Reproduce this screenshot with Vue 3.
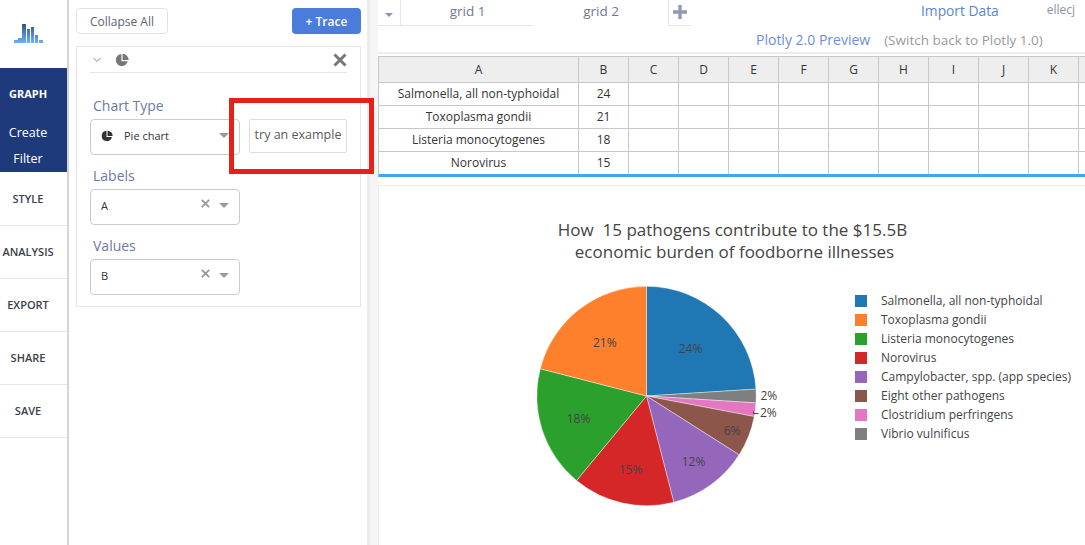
<script setup>
const navItems = ['STYLE', 'ANALYSIS', 'EXPORT', 'SHARE', 'SAVE']
const cols = ['C', 'D', 'E', 'F', 'G', 'H', 'I', 'J', 'K', '']
const rows = [
  ['Salmonella, all non-typhoidal', '24'],
  ['Toxoplasma gondii', '21'],
  ['Listeria monocytogenes', '18'],
  ['Norovirus', '15'],
]
const legend = [
  ['Salmonella, all non-typhoidal', '#1f77b4'],
  ['Toxoplasma gondii', '#fe802d'],
  ['Listeria monocytogenes', '#2ca02c'],
  ['Norovirus', '#d62728'],
  ['Campylobacter, spp. (app species)', '#9467bd'],
  ['Eight other pathogens', '#8c564b'],
  ['Clostridium perfringens', '#e377c2'],
  ['Vibrio vulnificus', '#7f7f7f'],
]
const cx = 110, cy = 110, r = 109.7
const order = [
  [24, '#1f77b4', '24%', 44, -47],
  [2, '#7f7f7f', '', 0, 0],
  [2, '#e377c2', '', 0, 0],
  [6, '#8c564b', '6%', 85.6, 34.7],
  [12, '#9467bd', '12%', 47, 65.7],
  [15, '#d62728', '15%', -16, 73.7],
  [18, '#2ca02c', '18%', -68, 22.7],
  [21, '#fe802d', '21%', -41.7, -53],
]
let acc = 0
const slices = order.map(([v, color, label, lx, ly]) => {
  const a0 = (acc / 100) * 2 * Math.PI
  acc += v
  const a1 = (acc / 100) * 2 * Math.PI
  const p = (a) => `${(cx + r * Math.sin(a)).toFixed(2)} ${(cy - r * Math.cos(a)).toFixed(2)}`
  return { d: `M${cx} ${cy}L${p(a0)}A${r} ${r} 0 0 1 ${p(a1)}Z`, color, label, x: cx + lx, y: cy + ly + 4 }
})
const bars = [
  [0, 17, 4, 3], [4, 15, 4, 5], [8, 1, 4, 19], [13, 6, 3, 14], [17, 4, 3, 16], [21, 12, 3, 8], [25, 17, 4, 3],
]
</script>

<template>
  <div class="page">
    <aside class="rail">
      <div class="logo">
        <svg width="29" height="20" viewBox="0 0 29 20">
          <defs>
            <linearGradient id="barGrad" gradientUnits="userSpaceOnUse" x1="0" y1="0" x2="0" y2="20">
              <stop offset="0" stop-color="#2f4f80" />
              <stop offset="0.55" stop-color="#4f86c8" />
              <stop offset="1" stop-color="#6ab0f5" />
            </linearGradient>
          </defs>
          <rect v-for="(b, i) in bars" :key="i" :x="b[0]" :y="b[1]" :width="b[2]" :height="b[3]" fill="url(#barGrad)" />
        </svg>
      </div>
      <div class="active">
        <div class="active-title">GRAPH</div>
        <div class="active-sub first">Create</div>
        <div class="active-sub">Filter</div>
      </div>
      <div class="nav-list">
        <div v-for="n in navItems" :key="n" class="nav">{{ n }}</div>
      </div>
    </aside>

    <section class="panel">
      <div class="panel-top">
        <button class="collapse">Collapse All</button>
        <button class="trace">+ Trace</button>
      </div>
      <div class="card">
        <div class="card-head">
          <svg class="chev" width="10" height="6" viewBox="0 0 10 6"><path d="M1.5 1l3.5 3.5L8.5 1" fill="none" stroke="#888" stroke-width="1" /></svg>
          <svg width="14" height="14" viewBox="0 0 14 14"><path d="M6.4 1a6 6 0 1 0 6.3 7.3H6.4zM7.6.8v6.3h6A6.2 6.2 0 0 0 7.6.8z" fill="#777" /></svg>
          <svg class="close" width="14" height="14" viewBox="0 0 14 14"><path d="M1.5 1.5l11 11M12.5 1.5l-11 11" stroke="#777" stroke-width="3" /></svg>
        </div>
        <div class="label first-label">Chart Type</div>
        <div class="type-row">
          <div class="select">
            <svg class="sel-pie" width="12" height="12" viewBox="0 0 14 14"><path d="M6.4 1a6 6 0 1 0 6.3 7.3H6.4zM7.6.8v6.3h6A6.2 6.2 0 0 0 7.6.8z" fill="#333" /></svg>
            <span class="sel-text">Pie chart</span>
            <span class="caret"></span>
          </div>
          <div class="example">try an example</div>
        </div>
        <div class="label">Labels</div>
        <div class="select">
          <span class="sel-text plain">A</span>
          <svg class="clear" width="9" height="9" viewBox="0 0 9 9"><path d="M.8.8l7.4 7.4M8.2.8L.8 8.2" stroke="#999" stroke-width="1.8" /></svg>
          <span class="caret near"></span>
        </div>
        <div class="label">Values</div>
        <div class="select">
          <span class="sel-text plain">B</span>
          <svg class="clear" width="9" height="9" viewBox="0 0 9 9"><path d="M.8.8l7.4 7.4M8.2.8L.8 8.2" stroke="#999" stroke-width="1.8" /></svg>
          <span class="caret near"></span>
        </div>
      </div>
    </section>
    <div class="gutter"></div>

    <main class="main">
      <div class="tabs">
        <div class="tab-menu"><span class="tab-caret"></span></div>
        <div class="tab tab1">grid 1</div>
        <div class="tab tab2">grid 2</div>
        <div class="tab-plus">
          <svg width="14" height="14" viewBox="0 0 14 14"><path d="M7 0v14M0 7h14" stroke="#8f9ab3" stroke-width="3.4" /></svg>
        </div>
        <a class="import">Import Data</a>
        <span class="user">ellecj</span>
      </div>
      <div class="preview">
        <span class="preview-a">Plotly 2.0 Preview</span>
        <span class="preview-b">(Switch back to Plotly 1.0)</span>
      </div>
      <div class="grid">
        <div class="row head">
          <div class="cell a">A</div>
          <div class="cell b">B</div>
          <div v-for="c in cols" :key="c" class="cell">{{ c }}</div>
        </div>
        <div v-for="r in rows" :key="r[0]" class="row">
          <div class="cell a">{{ r[0] }}</div>
          <div class="cell b">{{ r[1] }}</div>
          <div v-for="c in cols" :key="c" class="cell"></div>
        </div>
      </div>
      <div class="plot">
        <div class="plot-title">
          <div>How&nbsp; 15 pathogens contribute to the $15.5B</div>
          <div class="line2">economic burden of foodborne illnesses</div>
        </div>
        <div class="plot-body">
          <svg class="pie" width="250" height="224" viewBox="0 0 250 224">
            <g transform="translate(-0.5 1)">
              <path v-for="s in slices" :key="s.color" :d="s.d" :fill="s.color" stroke="#fff" stroke-width="0.4" />
              <text v-for="s in slices.filter(x => x.label)" :key="s.label" :x="s.x" :y="s.y" text-anchor="middle" class="pct">{{ s.label }}</text>
              <text x="224" y="114" class="pct">2%</text>
              <text x="223.5" y="131" class="pct">2%</text>
              <path d="M217 125.5v2h5" stroke="#444" stroke-width="1" fill="none" />
            </g>
          </svg>
          <ul class="legend">
            <li v-for="l in legend" :key="l[0]">
              <span class="swatch" :style="{ background: l[1] }"></span>
              <span>{{ l[0] }}</span>
            </li>
          </ul>
        </div>
      </div>
    </main>

    <div class="redbox"></div>
  </div>
</template>

<style>
html, body { margin: 0; overflow: hidden; background: #fff; }
</style>

<style scoped>
.page {
  position: relative;
  display: flex;
  width: 1085px;
  height: 545px;
  overflow: hidden;
  font-family: "Open Sans", sans-serif;
  color: #444;
  background: #fff;
}
.rail { width: 67px; flex: none; }
.logo { height: 68px; box-sizing: border-box; padding: 23px 0 0 14px; }
.logo svg { display: block; }
.active { height: 104px; background: #1f3a7a; color: #fff; text-align: center; box-sizing: border-box; padding: 18px 11px 0 0; }
.active-title { font-size: 11px; font-weight: 700; line-height: 15px; }
.active-sub { font-size: 12.5px; line-height: 26px; }
.active-sub.first { margin-top: 19px; }
.nav-list { padding-top: 1px; }
.nav {
  height: 53px;
  box-sizing: border-box;
  border-bottom: 1px solid #e6e6e6;
  display: flex;
  align-items: center;
  justify-content: center;
  padding: 0 11px 2px 0;
  font-size: 11px;
  font-weight: 600;
  color: #3a3f4a;
  white-space: nowrap;
}
.panel {
  width: 303px;
  flex: none;
  box-sizing: border-box;
  border-left: 2px solid #d4d4d4;
  border-right: 3px solid #ededed;
  padding: 8px 0 0 7px;
}
.gutter { width: 8px; flex: none; background: #f6f6f6; }
.panel-top { display: flex; justify-content: space-between; align-items: center; width: 285px; }
.collapse {
  width: 92px;
  height: 26px;
  padding: 0;
  background: #fff;
  border: 1px solid #e2e2e2;
  border-radius: 4px;
  font: 12px "Open Sans", sans-serif;
  color: #5c6470;
}
.trace {
  width: 69px;
  height: 26px;
  padding: 0;
  border: 0;
  border-radius: 4px;
  background: #4a7ddb;
  color: #fff;
  font: 600 12px "Open Sans", sans-serif;
}
.card {
  margin-top: 12px;
  width: 285px;
  height: 261px;
  box-sizing: border-box;
  border: 1px solid #e6e6e6;
  padding: 0 13px;
}
.card-head {
  height: 25px;
  display: flex;
  align-items: center;
  gap: 13px;
  border-bottom: 1px solid #e6e6e6;
  padding-left: 2px;
}
.close { margin-left: auto; }
.label { font-size: 14px; line-height: 20px; color: #6b7aa6; margin: 11px 0 3px 3px; }
.first-label { margin: 23px 0 3px 3px; }
.type-row { display: flex; gap: 9px; align-items: flex-start; }
.select {
  width: 150px;
  height: 36px;
  box-sizing: border-box;
  border: 1px solid #ccc;
  border-radius: 4px;
  display: flex;
  align-items: center;
  padding: 0 10px 4px;
  flex: none;
}
.sel-pie { margin-right: 11px; margin-top: 2px; }
.sel-text { font-size: 11px; color: #333; }
.sel-text.plain { flex: 1; }
.caret {
  margin-left: auto;
  width: 0;
  height: 0;
  border-left: 5px solid transparent;
  border-right: 5px solid transparent;
  border-top: 5px solid #999;
}
.caret.near { margin-left: 9px; }
.clear { margin-top: -3px; }
.example {
  width: 98px;
  height: 34px;
  box-sizing: border-box;
  border: 1px solid #ddd;
  border-radius: 2px;
  font-size: 12.5px;
  line-height: 30px;
  text-align: center;
  color: #5a5a5a;
  white-space: nowrap;
}
.main { flex: 1; min-width: 0; }
.tabs { display: flex; height: 26px; align-items: flex-start; }
.tab-menu {
  width: 22px;
  height: 25px;
  flex: none;
  border-right: 1px solid #e6e6e6;
  border-bottom: 1px solid #e6e6e6;
  display: flex;
  justify-content: center;
}
.tab-caret {
  width: 0;
  height: 0;
  border-left: 4px solid transparent;
  border-right: 4px solid transparent;
  border-top: 4px solid #8a94ad;
  margin-top: 13px;
}
.tab { flex: none; text-align: center; line-height: 22px; font-size: 13.5px; color: #6d7a96; }
.tab1 { width: 133px; height: 25px; border-bottom: 1px solid #e6e6e6; }
.tab2 { width: 134px; height: 26px; border-right: 1px solid #e6e6e6; }
.tab-plus {
  width: 22px;
  height: 26px;
  box-sizing: border-box;
  border-bottom: 1px solid #e6e6e6;
  padding: 5px 0 0 4px;
  flex: none;
}
.tab-plus svg { display: block; }
.import { margin-left: 230px; font-size: 13.8px; line-height: 22px; color: #5a86d8; white-space: nowrap; }
.user { margin-left: 48px; font-size: 12px; line-height: 19px; color: #8a93a3; white-space: nowrap; }
.preview {
  height: 28px;
  box-sizing: border-box;
  border-bottom: 2px solid #ececec;
  padding-left: 378px;
  font-size: 13.5px;
  line-height: 28px;
  white-space: nowrap;
}
.preview-a { color: #6c8ed8; font-size: 14px; }
.preview-b { margin-left: 14px; color: #9a9a9a; }
.grid { margin-top: 2px; border-top: 1px solid #c8c8c8; border-left: 1px solid #c8c8c8; border-bottom: 3px solid #42a5f0; }
.row { display: flex; height: 23px; }
.row.head { height: 26px; background: #eee; }
.cell {
  width: 50px;
  flex: none;
  box-sizing: border-box;
  border-right: 1px solid #c8c8c8;
  border-bottom: 1px solid #c8c8c8;
  font-size: 12px;
  line-height: 22px;
  text-align: center;
  color: #333;
  white-space: nowrap;
}
.row.head .cell { line-height: 25px; }
.row:last-child { height: 22px; }
.row:last-child .cell { border-bottom: 0; }
.cell.a { width: 200px; }
.plot { margin-top: 8px; border-top: 1px solid #ececec; border-left: 1px solid #ececec; height: 360px; }
.plot-title { text-align: center; font-size: 17px; line-height: 23px; color: #444; padding-top: 32px; width: 707px; white-space: nowrap; }
.line2 { margin-top: -1px; padding-left: 4px; }
.plot-body { display: flex; margin-top: 22px; }
.pie { margin-left: 158px; flex: none; }
.pct { font: 12px "Open Sans", sans-serif; fill: #444; }
.legend { list-style: none; margin: 6px 0 0 68px; padding: 0; font-size: 12px; color: #444; white-space: nowrap; }
.legend li { display: flex; align-items: center; height: 19px; gap: 14px; }
.swatch { width: 12px; height: 12px; flex: none; }
.redbox {
  position: absolute;
  left: 229px;
  top: 98px;
  width: 145px;
  height: 76px;
  box-sizing: border-box;
  border: 5px solid #e8201a;
}
</style>
